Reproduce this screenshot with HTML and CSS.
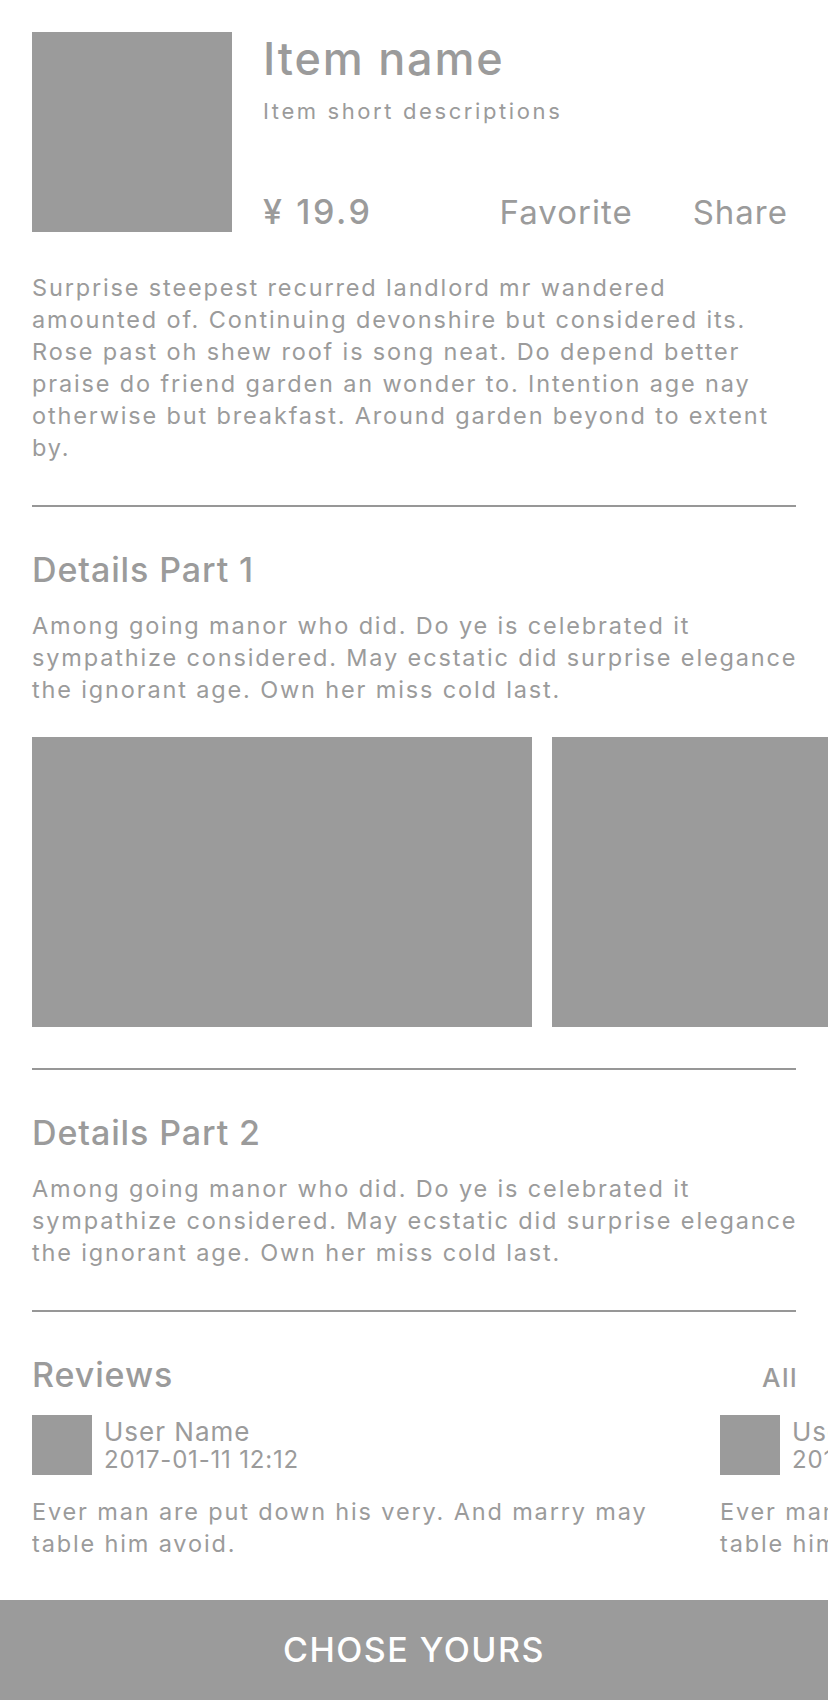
FILE: index.html
```html
<!DOCTYPE html>
<html lang="en">
<head>
<meta charset="utf-8">
<title>Item</title>
<link rel="stylesheet" href="styles.css">
</head>
<body>
<div class="page">
  <main class="content">
    <section class="header">
      <div class="thumb"></div>
      <div class="info">
        <h1 class="title">Item name</h1>
        <p class="subtitle">Item short descriptions</p>
        <div class="price-row">
          <span class="price">¥ 19.9</span>
          <span class="action">Favorite</span>
          <span class="action">Share</span>
        </div>
      </div>
    </section>
    <p class="text intro">Surprise steepest recurred landlord mr wandered amounted of. Continuing devonshire but considered its. Rose past oh shew roof is song neat. Do depend better praise do friend garden an wonder to. Intention age nay otherwise but breakfast. Around garden beyond to extent by.</p>
    <hr class="divider">
    <section class="section">
      <h2 class="heading">Details Part 1</h2>
      <p class="text detail">Among going manor who did. Do ye is celebrated it sympathize considered. May ecstatic did surprise elegance the ignorant age. Own her miss cold last.</p>
      <div class="gallery">
        <div class="photo"></div>
        <div class="photo"></div>
      </div>
    </section>
    <hr class="divider">
    <section class="section">
      <h2 class="heading">Details Part 2</h2>
      <p class="text detail">Among going manor who did. Do ye is celebrated it sympathize considered. May ecstatic did surprise elegance the ignorant age. Own her miss cold last.</p>
    </section>
    <hr class="divider">
    <section class="section">
      <div class="reviews-head">
        <h2 class="heading">Reviews</h2>
        <span class="all">All</span>
      </div>
      <div class="reviews">
        <div class="review">
          <div class="user">
            <div class="avatar"></div>
            <div class="user-info">
              <span class="user-name">User Name</span>
              <span class="date">2017-01-11 12:12</span>
            </div>
          </div>
          <p class="text review-text">Ever man are put down his very. And marry may table him avoid.</p>
        </div>
        <div class="review">
          <div class="user">
            <div class="avatar"></div>
            <div class="user-info">
              <span class="user-name">User Name</span>
              <span class="date">2017-01-11 12:12</span>
            </div>
          </div>
          <p class="text review-text">Ever man are put down his very. And marry may table him avoid.</p>
        </div>
      </div>
    </section>
  </main>
  <footer class="cta">CHOSE YOURS</footer>
</div>
</body>
</html>
```
FILE: styles.css
```css
* { box-sizing: border-box; }
html, body { margin: 0; padding: 0; }
body {
  width: 828px;
  overflow: hidden;
  background: #ffffff;
  color: #9b9b9b;
  font-family: Inter, "Noto Sans", sans-serif;
}
.page {
  min-height: 1700px;
  display: flex;
  flex-direction: column;
}
.content {
  padding: 32px 0 0 32px;
}
h1, h2, p { margin: 0; }

.header {
  display: flex;
  gap: 31px;
  padding-right: 32px;
}
.thumb {
  width: 200px;
  height: 200px;
  flex: none;
  background: #9b9b9b;
}
.info {
  flex: 1;
  display: flex;
  flex-direction: column;
}
.title {
  font-size: 45px;
  line-height: 54px;
  font-weight: 500;
  letter-spacing: 1.8px;
}
.subtitle {
  margin-top: 11px;
  font-size: 22px;
  line-height: 28px;
  letter-spacing: 2.6px;
}
.price-row {
  margin-top: auto;
  display: flex;
  align-items: baseline;
  font-size: 33px;
  line-height: 40px;
  padding-right: 8px;
  letter-spacing: 1px;
}
.price {
  font-size: 34px;
  font-weight: 500;
  letter-spacing: 2.6px;
  margin-right: auto;
}
.action + .action { margin-left: 60px; }

.text {
  font-size: 23.5px;
  line-height: 32px;
  letter-spacing: 1.85px;
}
.intro {
  margin-top: 40px;
  width: 750px;
}
.detail { width: 774px; }

.divider {
  margin: 41px 32px 0 0;
  border: 0;
  height: 2px;
  background: #979797;
}
.section { padding-top: 43px; }
.heading {
  font-size: 34px;
  line-height: 40px;
  font-weight: 500;
  letter-spacing: 0.9px;
}
.section .heading + .text { margin-top: 20px; }

.gallery {
  margin-top: 31px;
  display: flex;
  gap: 20px;
  overflow: hidden;
}
.photo {
  flex: none;
  width: 500px;
  height: 290px;
  background: #9b9b9b;
}

.reviews-head {
  display: flex;
  align-items: baseline;
  justify-content: space-between;
  padding-right: 30px;
}
.all {
  font-size: 26px;
  font-weight: 500;
  letter-spacing: 1.5px;
}
.reviews {
  margin-top: 20px;
  display: flex;
  gap: 20px;
  overflow: hidden;
}
.review {
  flex: none;
  width: 668px;
}
.user {
  display: flex;
  gap: 12px;
}
.avatar {
  width: 60px;
  height: 60px;
  flex: none;
  background: #9b9b9b;
}
.user-info {
  padding-top: 3px;
  display: flex;
  flex-direction: column;
}
.user-name {
  font-size: 26px;
  line-height: 28px;
  letter-spacing: 1px;
}
.date {
  font-size: 24px;
  line-height: 28px;
  letter-spacing: 0.8px;
}
.review-text {
  margin-top: 21px;
  width: 642px;
}

.cta {
  margin-top: auto;
  height: 100px;
  background: #9b9b9b;
  color: #ffffff;
  display: flex;
  align-items: center;
  justify-content: center;
  font-size: 34px;
  line-height: 40px;
  font-weight: 500;
  letter-spacing: 1.5px;
}
```
